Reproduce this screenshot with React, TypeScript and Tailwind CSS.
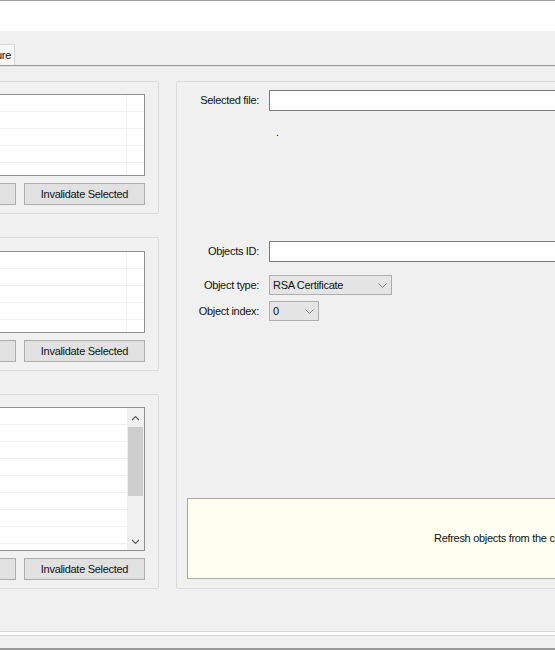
import React from "react";

const Rows = ({ n, divider }: { n: number; divider: boolean }) => (
  <div className="flex flex-col">
    {Array.from({ length: n }).map((_, i) => (
      <div key={i} className="flex h-[17px] border-b border-[#f0f0f0]">
        <div className={"flex-1 " + (divider ? "border-r border-[#f0f0f0]" : "")} />
        {divider && <div className="w-[17px]" />}
      </div>
    ))}
  </div>
);

const Btn = ({ children, w }: { children?: React.ReactNode; w: string }) => (
  <div
    className={
      "h-[22px] shrink-0 bg-[#e1e1e1] border border-[#adadad] flex items-center justify-center text-[#111] " + w
    }
  >
    {children}
  </div>
);

const Buttons = () => (
  <div className="mt-[7px] flex justify-end gap-[8px]">
    <Btn w="w-[80px]" />
    <Btn w="w-[121px]">Invalidate Selected</Btn>
  </div>
);

const Chevron = ({ up }: { up?: boolean }) => (
  <svg width="9" height="6" viewBox="0 0 9 6" className="block">
    <polyline
      points={up ? "1,5 4.5,1.5 8,5" : "1,1 4.5,4.5 8,1"}
      fill="none"
      stroke="#606060"
      strokeWidth="1.2"
    />
  </svg>
);

const SelChevron = () => (
  <svg width="9" height="5" viewBox="0 0 9 5" className="block">
    <polyline points="0.5,0.5 4.5,4.5 8.5,0.5" fill="none" stroke="#7a7a7a" strokeWidth="1" />
  </svg>
);

export default function App() {
  return (
    <div
      className="w-[555px] h-[650px] overflow-hidden bg-[#f0f0f0] flex flex-col text-[11px] leading-[13px] tracking-[-0.3px] text-[#111]"
      style={{ fontFamily: '"Liberation Sans", Arial, sans-serif' }}
    >
      <div className="h-px bg-[#a0a0a0] shrink-0" />
      <div className="h-[30px] bg-white shrink-0" />
      <div className="h-[13px] shrink-0" />
      <div className="h-[21px] shrink-0 flex">
        <div className="-ml-[50px] w-[65px] border border-b-0 border-[#d9d9d9] bg-[#f7f7f7] flex items-center justify-end pr-[3px] pt-[1px]">
          Signature
        </div>
      </div>
      <div className="h-px bg-[#9a9a9a] shrink-0" />
      <div className="h-px bg-[#e4e4e4] shrink-0" />
      <div className="h-[14px] shrink-0" />

      <div className="flex h-[508px] shrink-0">
        {/* left column */}
        <div className="-ml-[61px] w-[220px] shrink-0 flex flex-col gap-[23px]">
          <div className="h-[133px] border border-[#dcdcdc] rounded-[2px] pt-[12px] pr-[13px] pl-[10px]">
            <div className="h-[82px] border border-[#8f8f8f] bg-white overflow-hidden">
              <Rows n={5} divider />
            </div>
            <Buttons />
          </div>
          <div className="h-[134px] border border-[#dcdcdc] rounded-[2px] pt-[13px] pr-[13px] pl-[10px]">
            <div className="h-[82px] border border-[#8f8f8f] bg-white overflow-hidden">
              <Rows n={5} divider />
            </div>
            <Buttons />
          </div>
          <div className="h-[195px] border border-[#dcdcdc] rounded-[2px] pt-[12px] pr-[13px] pl-[10px]">
            <div className="h-[144px] border border-[#8f8f8f] bg-white overflow-hidden flex">
              <div className="flex-1">
                <Rows n={9} divider={false} />
              </div>
              <div className="w-[17px] bg-[#f0f0f0] flex flex-col">
                <div className="h-[19px] flex items-center justify-center">
                  <Chevron up />
                </div>
                <div className="h-[69px] mx-[1px] bg-[#cdcdcd]" />
                <div className="flex-1" />
                <div className="h-[17px] flex items-center justify-center">
                  <Chevron />
                </div>
              </div>
            </div>
            <Buttons />
          </div>
        </div>

        <div className="w-[17px] shrink-0" />

        {/* right panel */}
        <div className="w-[700px] shrink-0 border border-[#dcdcdc] rounded-[2px] flex flex-col">
          <div className="mt-[8px] flex items-center h-[21px]">
            <div className="w-[82px] text-right">Selected file:</div>
            <div className="ml-[10px] w-[420px] h-[21px] border border-[#7a7a7a] bg-white" />
          </div>
          <div className="h-[130px] pt-[15px] pl-[99px]">.</div>
          <div className="flex items-center h-[21px]">
            <div className="w-[82px] text-right">Objects ID:</div>
            <div className="ml-[10px] w-[420px] h-[21px] border border-[#7a7a7a] bg-white" />
          </div>
          <div className="mt-[13px] flex items-center h-[20px]">
            <div className="w-[82px] text-right">Object type:</div>
            <div className="ml-[10px] w-[123px] h-[20px] border border-[#adadad] bg-[#e5e5e5] flex items-center justify-between pl-[3px] pr-[4px]">
              <span>RSA Certificate</span>
              <SelChevron />
            </div>
          </div>
          <div className="mt-[6px] flex items-center h-[20px]">
            <div className="w-[82px] text-right">Object index:</div>
            <div className="ml-[10px] w-[50px] h-[20px] border border-[#adadad] bg-[#e5e5e5] flex items-center justify-between pl-[3px] pr-[4px]">
              <span>0</span>
              <SelChevron />
            </div>
          </div>
          <div className="mt-[177px] ml-[10px] w-[600px] h-[81px] border border-[#a8a8a8] bg-[#fefef1] flex items-center pl-[246px] whitespace-nowrap">
            Refresh objects from the card before selecting an object
          </div>
        </div>
      </div>

      <div className="h-[42px] shrink-0" />
      <div className="h-px bg-[#d8d8d8] shrink-0" />
      <div className="h-[3px] bg-white shrink-0" />
      <div className="h-px bg-[#d8d8d8] shrink-0" />
      <div className="h-[12px] shrink-0" />
      <div className="h-[2px] bg-[#9a9a9a] shrink-0" />
    </div>
  );
}
